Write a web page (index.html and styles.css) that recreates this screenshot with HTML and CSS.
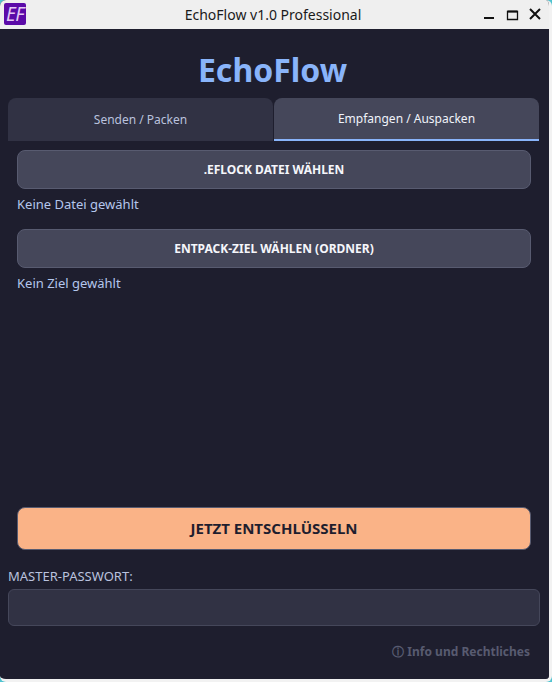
FILE: index.html
```html
<!DOCTYPE html>
<html lang="en">
<head>
  <meta charset="UTF-8">
  <title>EchoFlow v1.0 Professional</title>
  <meta name="viewport" content="width=device-width, initial-scale=1.0">
  <link rel="stylesheet" href="styles.css">
</head>
<body>
  <div class="window">

    <!-- Title bar -->
    <header class="titlebar">
      <div class="app-icon"><span>EF</span></div>
      <div class="window-title">EchoFlow v1.0 Professional</div>
      <div class="window-controls">
        <svg class="control" width="16" height="16" viewBox="0 0 16 16"><path d="M3 12h10" stroke="#111" stroke-width="2" fill="none"/></svg>
        <svg class="control" width="16" height="16" viewBox="0 0 16 16"><path d="M3.5 5.5h10v8h-10z" stroke="#111" stroke-width="1.3" fill="none"/><path d="M3.5 5.5h10" stroke="#111" stroke-width="2" fill="none"/></svg>
        <svg class="control" width="16" height="16" viewBox="0 0 16 16"><path d="M3 3l10 10M13 3l-10 10" stroke="#111" stroke-width="2" fill="none"/></svg>
      </div>
    </header>

    <main class="app">
      <h1 class="logo">EchoFlow</h1>

      <div class="tabs">
        <div class="tab">Senden / Packen</div>
        <div class="tab tab-active">Empfangen / Auspacken</div>
      </div>

      <section class="tab-page">
        <button class="btn">.EFLOCK DATEI WÄHLEN</button>
        <p class="status">Keine Datei gewählt</p>
        <button class="btn">ENTPACK-ZIEL WÄHLEN (ORDNER)</button>
        <p class="status">Kein Ziel gewählt</p>
        <div class="spacer"></div>
        <button class="btn btn-primary">JETZT ENTSCHLÜSSELN</button>
      </section>

      <label class="field-label" for="password">MASTER-PASSWORT:</label>
      <input class="field" id="password" type="password">

      <div class="info-link">ⓘ Info und Rechtliches</div>
    </main>
  </div>
</body>
</html>
```
FILE: styles.css
```css
html, body {
  height: 100%;
}

body {
  margin: 0;
  background: #4fc3d0;
  font-family: "Noto Sans", sans-serif;
  overflow: hidden;
}

.window {
  box-sizing: border-box;
  width: 552px;
  height: 682px;
  display: flex;
  flex-direction: column;
  background: #1e1e2e;
  border-right: 3px solid #f2f2f2;
  border-bottom: 3px solid #f2f2f2;
  border-radius: 6px;
  overflow: hidden;
}

.titlebar {
  height: 29px;
  flex: none;
  display: flex;
  align-items: center;
  background: #efefef;
}

.app-icon {
  width: 22px;
  height: 22px;
  align-self: flex-start;
  margin: 3px 0 0 4px;
  border-radius: 2px;
  background: #5b0aa8;
  color: #e4c8f5;
  display: flex;
  align-items: center;
  justify-content: center;
}

.app-icon span {
  font-size: 19px;
  font-style: italic;
  line-height: 22px;
  letter-spacing: -0.5px;
}

.window-title {
  flex: 1;
  text-align: center;
  font-size: 14px;
  color: #1a1a1a;
  margin-left: 39px;
  margin-top: -1px;
}

.window-controls {
  display: flex;
  gap: 7px;
  margin-right: 6px;
  margin-top: -1px;
}

.control {
  display: block;
}

.app {
  flex: 1;
  min-height: 0;
  display: flex;
  flex-direction: column;
  padding: 0 9px 0 8px;
}

.logo {
  margin: 19px 0 0;
  height: 50px;
  padding-right: 3px;
  text-align: center;
  font-size: 32px;
  line-height: 44px;
  font-weight: 700;
  color: #89b4fa;
}

.tabs {
  display: flex;
  gap: 1px;
  margin-right: 1px;
}

.tab {
  flex: 1;
  box-sizing: border-box;
  height: 43px;
  border-radius: 8px 8px 0 0;
  background: #313244;
  color: #bac2de;
  font-size: 12px;
  line-height: 43px;
  text-align: center;
}

.tab-active {
  background: #45475a;
  color: #f0f3fb;
  border-bottom: 2px solid #89b4fa;
  line-height: 42px;
}

.tab-page {
  height: 400px;
  flex: none;
  display: flex;
  flex-direction: column;
  padding: 9px 9px 0;
}

.btn {
  box-sizing: border-box;
  height: 39px;
  flex: none;
  border: 1px solid #585b70;
  border-radius: 8px;
  background: #45475a;
  color: #f5f6fb;
  font-family: inherit;
  font-size: 12px;
  font-weight: 700;
}

.btn-primary {
  height: 43px;
  padding-bottom: 3px;
  background: #fab387;
  color: #1e1e2e;
  font-size: 15px;
}

.status {
  margin: 0;
  height: 40px;
  padding-top: 6px;
  box-sizing: border-box;
  font-size: 13px;
  line-height: 18px;
  color: #b4c6ec;
}

.spacer {
  flex: 1;
}

.field-label {
  margin-top: 17px;
  font-size: 13px;
  line-height: 18px;
  color: #bac2de;
}

.field {
  box-sizing: border-box;
  height: 37px;
  width: 100%;
  margin-top: 4px;
  border: 1px solid #45475a;
  border-radius: 6px;
  background: #313244;
}

.info-link {
  margin-top: 17px;
  padding-right: 10px;
  text-align: right;
  font-size: 12px;
  line-height: 18px;
  font-weight: 700;
  color: #585b70;
}
```
